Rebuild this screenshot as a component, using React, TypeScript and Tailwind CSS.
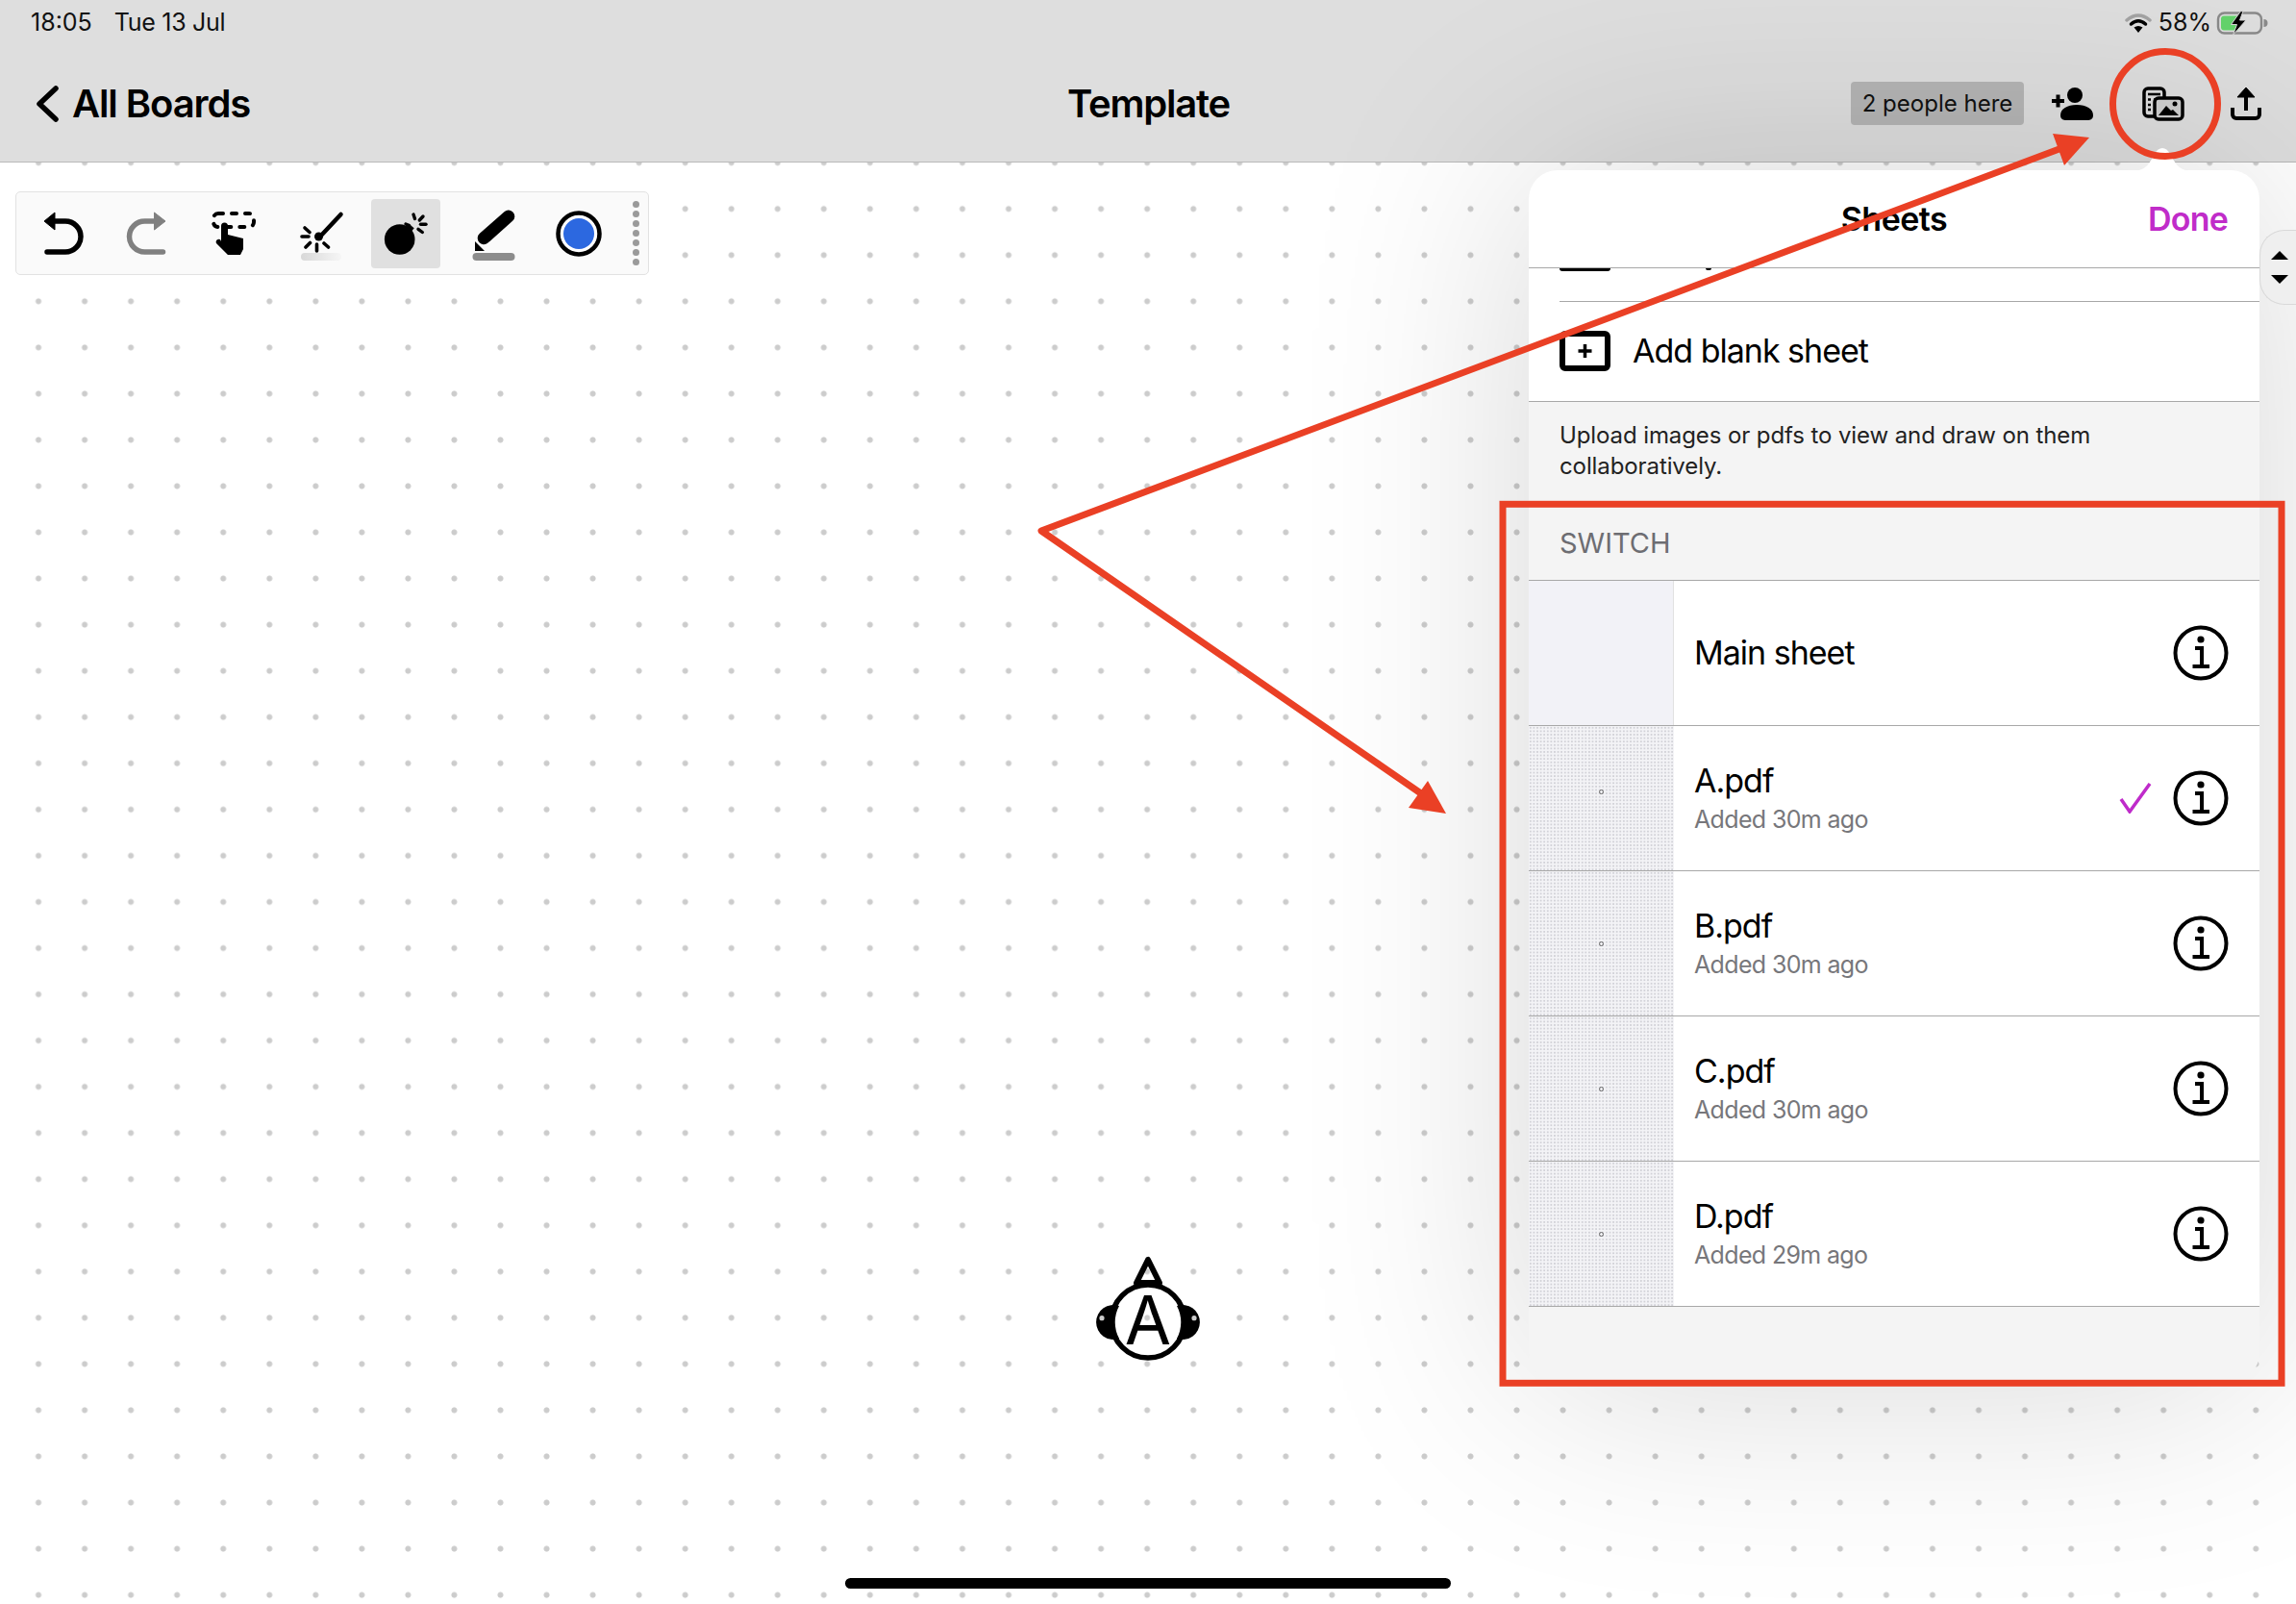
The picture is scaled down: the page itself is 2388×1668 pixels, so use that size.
import React from 'react';

const sheets = [
  { name: 'A.pdf', added: 'Added 30m ago', selected: true, mark: 'mb-[14px]' },
  { name: 'B.pdf', added: 'Added 30m ago', selected: false, mark: '' },
  { name: 'C.pdf', added: 'Added 30m ago', selected: false, mark: '' },
  { name: 'D.pdf', added: 'Added 29m ago', selected: false, mark: '' },
];

const ToolIcon: React.FC<{ active?: boolean; children: React.ReactNode }> = ({ active, children }) => (
  <div className={`w-[72px] h-[72px] shrink-0 rounded-[4px] ${active ? 'bg-[#e0e0e0]' : ''}`}>
    <svg width="72" height="72" viewBox="-36 -36 72 72" className="block">
      {children}
    </svg>
  </div>
);

const Toolbar = () => (
  <div className="relative w-[659px] h-[87px] ml-[16px] mt-[30px] flex items-center gap-[17.5px] pl-[11px] bg-[#fafafa] border border-[#e2e2e2] rounded-[5px]">
    {/* undo */}
    <ToolIcon>
      <path d="M-8 -13 H4 a16 16 0 0 1 0 32 H-15" fill="none" stroke="#000" strokeWidth="5.5" strokeLinecap="round" />
      <path d="M-7 -22 L-18 -13 L-7 -4 Z" fill="#000" stroke="#000" strokeWidth="1" strokeLinejoin="round" />
    </ToolIcon>
    {/* redo */}
    <ToolIcon>
      <path d="M7 -13 H-3.5 a16 16 0 0 0 0 32 H15.5" fill="none" stroke="#808080" strokeWidth="5.5" strokeLinecap="round" />
      <path d="M6.5 -22 L18 -13 L6.5 -4 Z" fill="#808080" stroke="#808080" strokeWidth="1" strokeLinejoin="round" />
    </ToolIcon>
    {/* select */}
    <ToolIcon>
      <rect x="-21" y="-21" width="42" height="14" rx="5" fill="none" stroke="#000" strokeWidth="4" strokeDasharray="5 9" strokeLinecap="round" />
      <path d="M-13 -8 a3.5 3.5 0 0 1 7 0 V1 L10 5 V16 L7 22 H-6 L-18 10 a3 3 0 0 1 4 -4 L-13 8 Z" fill="#000" />
    </ToolIcon>
    {/* laser */}
    <ToolIcon>
      <defs>
        <linearGradient id="laserBar" x1="0" x2="1" y1="0" y2="0">
          <stop offset="0" stopColor="#d8d8d8" />
          <stop offset="1" stopColor="#f6f6f6" />
        </linearGradient>
      </defs>
      <rect x="-20" y="20" width="42" height="8" rx="4" fill="url(#laserBar)" />
      <path d="M21.5 -20 L-1 4" stroke="#000" strokeWidth="4.5" strokeLinecap="round" />
      <circle cx="-1.5" cy="3" r="4.5" fill="#000" />
      <g stroke="#000" strokeWidth="3.6" strokeLinecap="round">
        <path d="M-19 3 H-12" />
        <path d="M-16 -6 L-11 -1.5" />
        <path d="M-15 14 L-10.5 9.5" />
        <path d="M-3.5 11 V18" />
        <path d="M4 10 L8.5 14" />
      </g>
    </ToolIcon>
    {/* bomb */}
    <ToolIcon active>
      <circle cx="-6.3" cy="6" r="15.8" fill="#000" />
      <path d="M2 -3 L6 -8" stroke="#000" strokeWidth="7" />
      <g stroke="#000" strokeWidth="3.4" strokeLinecap="round">
        <path d="M8 -20 L9.5 -15.5" />
        <path d="M18 -18 L14.3 -14" />
        <path d="M21 -9.7 L15.5 -9.7" />
        <path d="M17.3 -1.5 L13 -4.7" />
        <path d="M0 -10 L3.6 -8.4" />
      </g>
    </ToolIcon>
    {/* marker */}
    <ToolIcon>
      <path d="M16.8 -18 L-8.8 4.7" stroke="#000" strokeWidth="13" strokeLinecap="round" />
      <path d="M-18 8 V18 H-8 Z" fill="#000" />
      <rect x="-20.5" y="20" width="44" height="8" rx="4" fill="#8c8c8c" />
    </ToolIcon>
    {/* colour */}
    <ToolIcon>
      <circle cx="1" cy="0" r="21.5" fill="#fff" stroke="#000" strokeWidth="4.5" />
      <circle cx="1" cy="0" r="16" fill="#2c68e0" />
    </ToolIcon>
    {/* drag handle */}
    <div className="ml-[3.5px] flex flex-col gap-[3px]">
      {[0, 1, 2, 3, 4, 5, 6].map((i) => (
        <span key={i} className="block w-[7px] h-[7px] rounded-full bg-[#9a9a9a]" />
      ))}
    </div>
  </div>
);

const InfoIcon = () => (
  <svg width="58" height="58" viewBox="-29 -29 58 58" className="block shrink-0">
    <circle r="26.5" fill="none" stroke="#000" strokeWidth="4" />
    <circle cx="0" cy="-14" r="3.6" fill="#000" />
    <path d="M-6 -5 H1 V14 M-8.5 14 H9" fill="none" stroke="#000" strokeWidth="4" />
  </svg>
);

const SheetsPopover = () => (
  <div className="absolute left-[1590px] top-[177px] w-[760px] h-[1260px] flex flex-col bg-[#f4f4f4] rounded-[30px] shadow-[0_0_240px_rgba(0,0,0,0.16)]">
    {/* popover arrow */}
    <svg width="64" height="27" viewBox="0 0 64 27" className="absolute left-[627px] top-[-26px]">
      <path d="M0 27 C14 27 18 20 24 9 C28 1 36 1 40 9 C46 20 50 27 64 27 Z" fill="#fff" />
    </svg>

    <div className="relative h-[102px] shrink-0 flex items-center justify-end pr-[33px] bg-white rounded-t-[30px] border-b border-[#a8a8a8]">
      <span className="absolute left-0 right-0 text-center text-[34px] font-semibold tracking-[-0.5px] text-black">Sheets</span>
      <span className="relative text-[34px] font-semibold tracking-[-0.8px] text-[#c02cc9]">Done</span>
    </div>

    {/* row scrolled under the header */}
    <div className="h-[35px] shrink-0 bg-white pl-[32px]">
      <div className="relative h-full border-b border-[#a8a8a8]">
        <div className="w-[53px] h-[3px] bg-black rounded-b-[3px]" />
        <div className="absolute left-[152px] top-0 w-[6px] h-[2px] bg-black rounded-b-[2px]" />
      </div>
    </div>

    <div className="h-[104px] shrink-0 flex items-center gap-[23px] pl-[32px] bg-white border-b border-[#a8a8a8]">
      <svg width="53" height="42" viewBox="0 0 53 42" className="block shrink-0 mb-[2px]">
        <rect x="3" y="3" width="47" height="36" rx="3" fill="none" stroke="#000" strokeWidth="6" />
        <path d="M26.5 14 V28 M19.5 21 H33.5" stroke="#000" strokeWidth="3.5" />
      </svg>
      <span className="mb-[2px] text-[34px] tracking-[-1px] text-black">Add blank sheet</span>
    </div>

    <div className="h-[186px] shrink-0 flex flex-col px-[32px] pt-[19px] border-b border-[#a8a8a8]">
      <p className="w-[640px] text-[24px] leading-[32px] tracking-[-0.1px] text-[#222]">
        Upload images or pdfs to view and draw on them collaboratively.
      </p>
      <p className="mt-[46px] text-[29px] leading-[36px] text-[#6d6d72]">SWITCH</p>
    </div>

    <div className="h-[151px] shrink-0 flex bg-white border-b border-[#a8a8a8]">
      <div className="w-[151px] shrink-0 bg-[#f2f2f7] border-r border-[#e2e2e2]" />
      <div className="flex-1 flex items-center justify-between pl-[21px] pr-[32px]">
        <span className="mb-[2px] text-[34px] tracking-[-1px] text-black">Main sheet</span>
        <InfoIcon />
      </div>
    </div>

    {sheets.map((sheet) => (
      <div key={sheet.name} className="h-[151px] shrink-0 flex bg-white border-b border-[#a8a8a8]">
        <div className="w-[151px] shrink-0 flex items-center justify-center bg-[#f3f3f6] bg-[radial-gradient(circle,#d2d2d8_0.9px,transparent_1.2px)] bg-[length:3.6px_3.6px]">
          <span className={`block w-[5px] h-[5px] rounded-full border border-[#666] ${sheet.mark}`} />
        </div>
        <div className="flex-1 flex items-center pl-[21px] pr-[32px]">
          <div className="flex-1 flex flex-col">
            <span className="text-[34px] leading-[42px] tracking-[-1px] text-black">{sheet.name}</span>
            <span className="mt-[2px] text-[25px] leading-[34px] tracking-[-0.65px] text-[#77777b]">{sheet.added}</span>
          </div>
          {sheet.selected && (
            <svg width="34" height="32" viewBox="0 0 34 32" className="block shrink-0 mr-[22px]">
              <path d="M2 17 L11 30 L32 1" fill="none" stroke="#bf2bca" strokeWidth="3.5" />
            </svg>
          )}
          <InfoIcon />
        </div>
      </div>
    ))}

    {/* side handle */}
    <div className="absolute left-[760px] top-[62px] w-[38px] h-[78px] flex flex-col items-start justify-center gap-[16px] pl-[11px] bg-[#efefef] border border-r-0 border-[#d9d9d9] rounded-l-[26px]">
      <svg width="18" height="9" viewBox="0 0 18 9" className="block"><path d="M9 0 L18 9 H0 Z" fill="#000" /></svg>
      <svg width="18" height="9" viewBox="0 0 18 9" className="block"><path d="M0 0 H18 L9 9 Z" fill="#000" /></svg>
    </div>
  </div>
);

const Annotations = () => (
  <svg width="2388" height="1668" viewBox="0 0 2388 1668" className="absolute left-0 top-0 pointer-events-none">
    <circle cx="2252" cy="108" r="54.5" fill="none" stroke="#ea4025" strokeWidth="7" />
    <rect x="1563" y="524.3" width="810" height="914" fill="none" stroke="#ea4025" strokeWidth="7" />
    <path d="M2155 150 L1083 552 L1485 830" fill="none" stroke="#ea4025" strokeWidth="7" strokeLinejoin="round" />
    <path d="M2135 139 L2173 143 L2147 172 Z" fill="#ea4025" />
    <path d="M1485 812 L1504 846 L1465 840 Z" fill="#ea4025" />
  </svg>
);

export default function App() {
  return (
    <div
      className="relative w-[2388px] h-[1668px] overflow-hidden bg-white bg-[radial-gradient(circle,#cccccc_2.6px,transparent_3.4px)] bg-[length:48.06px_48.06px] bg-[position:16px_1px]"
      style={{ fontFamily: 'Inter, "Liberation Sans", sans-serif' }}
    >
      {/* Header */}
      <header className="h-[169px] flex flex-col bg-[#dedede] border-b border-[#b9b9b9]">
        <div className="h-[47px] shrink-0 flex items-center justify-between pl-[32px] pr-[29px] text-[25px] text-[#111]">
          <div className="flex gap-[23px]">
            <span>18:05</span>
            <span className="tracking-[-0.3px]">Tue 13 Jul</span>
          </div>
          <div className="flex items-center gap-[5px]">
            <svg width="28" height="20" viewBox="0 0 28 20" className="block mr-[2px]">
              <path d="M2 7 Q14 -3 26 7" fill="none" stroke="#a3a3a3" strokeWidth="3.5" strokeLinecap="round" />
              <path d="M6.5 11 Q14 4.5 21.5 11" fill="none" stroke="#000" strokeWidth="3.5" strokeLinecap="round" />
              <path d="M9.5 14.5 Q14 11.5 18.5 14.5 L14 20 Z" fill="#000" />
            </svg>
            <span>58%</span>
            <svg width="54" height="26" viewBox="0 0 54 26" className="block">
              <rect x="2" y="2.5" width="45" height="21" rx="6.5" fill="none" stroke="#8a8a8a" strokeWidth="2.4" />
              <path d="M5 9 a3 3 0 0 1 3 -3.5 H23 V20.5 H8 a3 3 0 0 1 -3 -3.5 Z" fill="#63d36b" />
              <path d="M49.5 9 a4 4 0 0 1 0 8 Z" fill="#8a8a8a" />
              <path d="M25.5 0.7 L15.5 14.5 H21.5 L17.5 25.3 L31 10 H24.5 L28 0.7 Z" fill="#000" stroke="#d6d6d6" strokeWidth="1" />
            </svg>
          </div>
        </div>
        <div className="flex-1 grid grid-cols-3 items-center pl-[37px] pr-[36px]">
          <div className="flex items-center gap-[14px]">
            <svg width="24" height="38" viewBox="0 0 24 38" className="block shrink-0">
              <path d="M21 3 L4 19 L21 35" fill="none" stroke="#000" strokeWidth="5.5" strokeLinecap="round" strokeLinejoin="round" />
            </svg>
            <span className="text-[40px] font-semibold tracking-[-1.1px] text-black">All Boards</span>
          </div>
          <div className="text-center text-[40px] font-semibold tracking-[-1.2px] text-black">Template</div>
          <div className="flex items-center justify-end">
            <span className="w-[180px] h-[45px] flex items-center justify-center rounded-[4px] bg-[#b5b5b5] text-[24px] text-[#111]">2 people here</span>
            <svg width="44" height="36" viewBox="0 0 44 36" className="block shrink-0 ml-[28px]">
              <path d="M1 15 H14 M7.5 8.5 V21.5" stroke="#000" strokeWidth="4" />
              <circle cx="25" cy="9" r="8" fill="#000" />
              <path d="M10 30 C10 23 17 19 27 19 C37 19 44 23 44 30 C44 34 41 35 38 35 H16 C13 35 10 34 10 30 Z" fill="#000" />
            </svg>
            <svg width="44" height="36" viewBox="0 0 44 36" className="block shrink-0 ml-[51px]">
              <rect x="2" y="2" width="21" height="29" rx="4" fill="none" stroke="#000" strokeWidth="3.5" />
              <path d="M6 8 H19 M6 13.5 H9 M12 13.5 H19 M6 19 H9 M6 24 H9" stroke="#000" strokeWidth="2.5" />
              <rect x="13" y="12" width="29" height="22" rx="4" fill="#cfcfcf" stroke="#000" strokeWidth="3.5" />
              <path d="M17 30 L25 20 L30 25 L32 24 L38 30 Z" fill="#000" />
              <circle cx="34" cy="18" r="2.5" fill="#000" />
            </svg>
            <svg width="32" height="36" viewBox="0 0 32 36" className="block shrink-0 ml-[48px]">
              <path d="M16 1 L25 11 H7 Z" fill="#000" stroke="#000" strokeWidth="1" strokeLinejoin="round" />
              <path d="M16 9 V25" stroke="#000" strokeWidth="4" />
              <path d="M2 22 V29 a4 4 0 0 0 4 4 H26 a4 4 0 0 0 4 -4 V22" fill="none" stroke="#000" strokeWidth="4" />
            </svg>
          </div>
        </div>
      </header>

      <Toolbar />

      {/* Participant cursor */}
      <svg width="120" height="120" viewBox="0 0 120 120" className="absolute left-[1134px] top-[1304px]">
        <path d="M60 6 L48 30 H72 Z" fill="none" stroke="#000" strokeWidth="6" strokeLinejoin="round" />
        <path d="M30 54 A18 18 0 1 0 30 88 A36 36 0 0 1 30 54 Z" fill="#000" />
        <path d="M90 54 A18 18 0 1 1 90 88 A36 36 0 0 0 90 54 Z" fill="#000" />
        <circle cx="12" cy="66.7" r="2.6" fill="#cccccc" />
        <circle cx="108" cy="66.7" r="2.6" fill="#cccccc" />
        <circle cx="60" cy="70" r="38" fill="none" stroke="#000" strokeWidth="5.5" />
        <text x="60" y="94" textAnchor="middle" fontSize="70" fill="#000" fontFamily="Inter, sans-serif">A</text>
      </svg>

      <SheetsPopover />
      <Annotations />

      {/* Home indicator */}
      <div className="absolute left-[879px] bottom-[16px] w-[630px] h-[11px] rounded-full bg-black" />
    </div>
  );
}
